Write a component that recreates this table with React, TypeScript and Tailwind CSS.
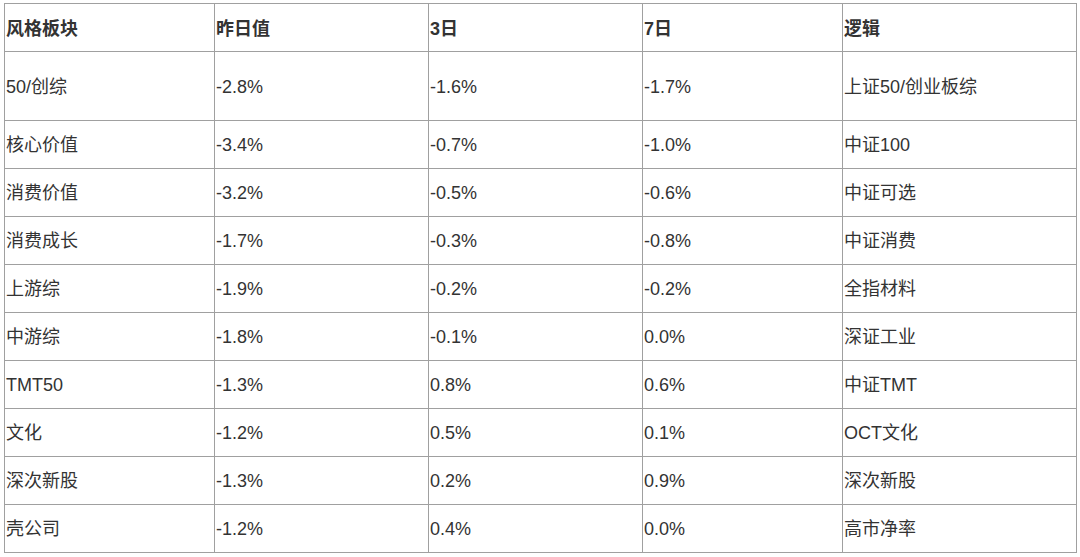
const rows: [string, string, string, string, string][] = [
  ["50/创综", "-2.8%", "-1.6%", "-1.7%", "上证50/创业板综"],
  ["核心价值", "-3.4%", "-0.7%", "-1.0%", "中证100"],
  ["消费价值", "-3.2%", "-0.5%", "-0.6%", "中证可选"],
  ["消费成长", "-1.7%", "-0.3%", "-0.8%", "中证消费"],
  ["上游综", "-1.9%", "-0.2%", "-0.2%", "全指材料"],
  ["中游综", "-1.8%", "-0.1%", "0.0%", "深证工业"],
  ["TMT50", "-1.3%", "0.8%", "0.6%", "中证TMT"],
  ["文化", "-1.2%", "0.5%", "0.1%", "OCT文化"],
  ["深次新股", "-1.3%", "0.2%", "0.9%", "深次新股"],
  ["壳公司", "-1.2%", "0.4%", "0.0%", "高市净率"],
];

const headers = ["风格板块", "昨日值", "3日", "7日", "逻辑"];
const widths = ["w-[210px]", "w-[214px]", "w-[214px]", "w-[200px]", "w-[234px]"];

export default function App() {
  return (
    <div className="min-h-screen bg-white pt-[3px] pl-[4px] text-[18px] text-[#333] font-['Liberation_Sans','Noto_Sans_CJK_SC',sans-serif]">
      <table className="w-[1073px] table-fixed border-collapse">
        <thead>
          <tr className="h-[48px]">
            {headers.map((h, i) => (
              <th
                key={h}
                className={`${widths[i]} border border-[#a0a0a0] px-[1px] pt-[3px] text-left align-middle font-bold`}
              >
                {h}
              </th>
            ))}
          </tr>
        </thead>
        <tbody>
          {rows.map((r, ri) => (
            <tr key={r[0]} className={ri === 0 ? "h-[69px]" : "h-[48px]"}>
              {r.map((c, ci) => (
                <td key={ci} className="border border-[#a0a0a0] px-[1px] pt-[2px] align-middle">
                  {c}
                </td>
              ))}
            </tr>
          ))}
        </tbody>
      </table>
    </div>
  );
}
